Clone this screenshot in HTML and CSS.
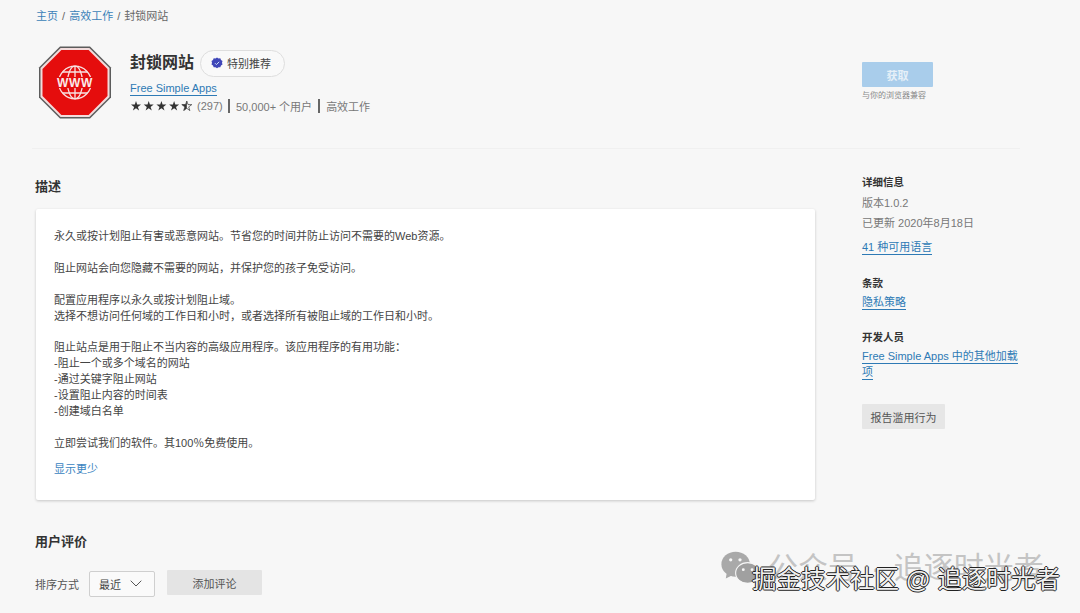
FILE: index.html
```html
<!DOCTYPE html>
<html lang="zh-CN">
<head>
<meta charset="utf-8">
<title>封锁网站</title>
<link rel="stylesheet" href="styles.css">
</head>
<body>
<div class="page">
  <nav class="crumbs"><a>主页</a> / <a>高效工作</a> / <span>封锁网站</span></nav>
  <header class="hero">
    <svg class="logo" viewBox="0 0 74 74" width="74" height="74">
      <polygon points="22,0.5 52,0.5 73,21.500 73,51.500 52,72.500 22,72.500 1,51.500 1,21.500" fill="#5c5c5c"/>
      <polygon points="22.6,2 51.4,2 71.5,22.100 71.5,50.900 51.4,71 22.6,71 2.5,50.900 2.500,22.100" fill="#f3dcdc"/>
      <polygon points="23.4,4 50.6,4 69.5,22.900 69.5,50.100 50.6,69 23.4,69 4.500,50.100 4.500,22.900" fill="#e50d0d"/>
      <g fill="none" stroke="#f8e2e2" stroke-width="1.300">
        <circle cx="37" cy="36.500" r="16.300"/>
        <ellipse cx="37" cy="36.500" rx="7.500" ry="16.300"/>
        <path d="M37 20v33M24.500 26h25M24.500 47h25"/>
      </g>
      <rect x="18" y="31" width="38" height="11" fill="#e50d0d"/>
      <text class="www" x="37" y="40.700" text-anchor="middle">WWW</text>
    </svg>
    <div class="hero-info">
      <div class="title-row">
        <h1>封锁网站</h1>
        <span class="badge">
          <svg viewBox="0 0 12 12" width="12" height="12">
            <path d="M6 .4l1.500 1 1.800-.1.700 1.700 1.500 1-.5 1.800.5 1.800-1.500 1-.7 1.700-1.800-.1-1.500 1-1.500-1-1.800.1-.7-1.700-1.500-1 .5-1.800-.5-1.800 1.500-1 .7-1.700 1.800.1z" fill="#3f46b8"/>
            <path d="M4 6.200l1.400 1.400L8.200 4.800" fill="none" stroke="#cfe0f5" stroke-width="1"/>
          </svg>
          特别推荐
        </span>
      </div>
      <a class="link publisher">Free Simple Apps</a>
      <div class="meta">
        <svg class="stars" viewBox="0 0 61 10" width="61" height="10">
          <defs>
            <path id="star" d="M5 0l1.200 3.600H10L6.900 5.900 8.100 9.600 5 7.300 1.900 9.600 3.100 5.900 0 3.600h3.800z"/>
          </defs>
          <use href="#star" x="0" fill="#333"/>
          <use href="#star" x="12.700" fill="#333"/>
          <use href="#star" x="25.400" fill="#333"/>
          <use href="#star" x="38.100" fill="#333"/>
          <use href="#star" x="50.800" fill="none" stroke="#333" stroke-width=".7"/>
          <path d="M55.800 0v7.300L52.700 9.600 53.900 5.900 50.800 3.600h3.800z" fill="#333"/>
        </svg>
        <span class="count">(297)</span>
        <i class="sep"></i>
        <span>50,000+ 个用户</span>
        <i class="sep"></i>
        <span>高效工作</span>
      </div>
    </div>
    <div class="get">
      <button class="get-btn">获取</button>
      <p>与你的浏览器兼容</p>
    </div>
  </header>
  <hr class="rule">
  <div class="columns">
    <main class="main">
      <h2>描述</h2>
      <section class="card">
        <p>永久或按计划阻止有害或恶意网站。节省您的时间并防止访问不需要的Web资源。</p>
        <p>阻止网站会向您隐藏不需要的网站，并保护您的孩子免受访问。</p>
        <p>配置应用程序以永久或按计划阻止域。<br>选择不想访问任何域的工作日和小时，或者选择所有被阻止域的工作日和小时。</p>
        <p>阻止站点是用于阻止不当内容的高级应用程序。该应用程序的有用功能：<br>-阻止一个或多个域名的网站<br>-通过关键字阻止网站<br>-设置阻止内容的时间表<br>-创建域白名单</p>
        <p>立即尝试我们的软件。其100％免费使用。</p>
        <a class="more">显示更少</a>
      </section>
      <h2 class="reviews">用户评价</h2>
      <div class="sort">
        <span>排序方式</span>
        <span class="select">最近
          <svg viewBox="0 0 12 7" width="12" height="7"><path d="M.7.7L6 6l5.300-5.300" fill="none" stroke="#555" stroke-width="1"/></svg>
        </span>
        <button class="add">添加评论</button>
      </div>
    </main>
    <aside class="side">
      <h3>详细信息</h3>
      <p class="line">版本1.0.2</p>
      <p class="line">已更新 2020年8月18日</p>
      <p class="side-link"><a class="link">41 种可用语言</a></p>
      <h3 class="gap">条款</h3>
      <p class="side-link tight"><a class="link">隐私策略</a></p>
      <h3 class="gap2">开发人员</h3>
      <p class="side-link dev"><a class="link">Free Simple Apps 中的其他加载项</a></p>
      <button class="report">报告滥用行为</button>
    </aside>
  </div>
</div>
<div class="wm">
  <svg class="wechat" viewBox="0 0 36 32" width="40" height="35">
    <ellipse cx="14" cy="13" rx="13" ry="11.500" fill="#a9a9a9"/>
    <path d="M6 20l-1 6 6-3z" fill="#a9a9a9"/>
    <ellipse cx="25" cy="21" rx="11" ry="9.500" fill="#a0a0a0" stroke="#f7f7f7" stroke-width="1"/>
    <circle cx="9.500" cy="9" r="1.500" fill="#f7f7f7"/><circle cx="18" cy="9" r="1.500" fill="#f7f7f7"/>
    <circle cx="21" cy="18" r="1.300" fill="#f7f7f7"/><circle cx="29" cy="18" r="1.300" fill="#f7f7f7"/>
  </svg>
  <span class="wm-a">公众号 · 追逐时光者</span>
</div>
<div class="wm-b">掘金技术社区 @ 追逐时光者</div>
</body>
</html>
```
FILE: styles.css
```css
* { box-sizing: border-box; }
html, body { margin: 0; height: 100%; }
body {
  width: 1080px; height: 613px; overflow: hidden; position: relative;
  background: #f7f7f7; color: #333;
  font-family: "Liberation Sans", "Noto Sans CJK SC", sans-serif;
  font-size: 11px;
}
h1, h2, h3, p { margin: 0; }
button { font: inherit; border: 0; padding: 0; }
.page { padding: 0 0 0 36px; }

.crumbs { height: 33px; line-height: 32px; font-size: 11px; color: #666; word-spacing: 1px; }
.crumbs a { color: #3a7fb8; }

.hero { display: flex; height: 115px; padding-top: 13px; margin-left: 2px; }
.logo { display: block; flex: none; }
.www { font: bold 12px "Liberation Sans", sans-serif; fill: #fbeaea; letter-spacing: .6px; }
.hero-info { width: 750px; padding-left: 18px; }
.title-row { display: flex; align-items: center; height: 30px; margin-top: 2px; }
h1 { font-size: 16px; line-height: 22px; color: #333; font-weight: 700; width: 70px; flex: none; }
.badge {
  display: flex; align-items: center; gap: 4px; height: 27px; width: 85px; padding-left: 10px;
  border: 1px solid #dedede; border-radius: 14px; font-size: 11px; color: #444; background: #f9f9f9;
}
.link { color: #2e7ab5; border-bottom: 1px solid #2e7ab5; }
.publisher { display: inline-block; font-size: 11px; line-height: 13px; margin-top: 4px; }
.meta { display: flex; align-items: center; height: 16px; margin-top: 2px; color: #777; font-size: 11px; }
.stars { display: block; flex: none; margin-left: 1px; }
.count { width: 25px; margin-left: 5px; }
.sep { width: 2px; height: 14px; background: #666; margin: 0 6px; }

.get { margin-top: 16px; flex: none; }
.get-btn {
  display: block; width: 71px; height: 25px; border-radius: 1px;
  background: #a9cdeb; color: #e6f0f8; font-size: 11px; font-weight: 700;
}
.get p { font-size: 8px; line-height: 12px; color: #888; margin-top: 3px; white-space: nowrap; }

.rule { margin: 0 60px 0 -4px; border: 0; border-top: 1px solid #f0f0f0; height: 0; }

.columns { display: flex; }
.main { width: 779px; flex: none; }
h2 { font-size: 13px; line-height: 18px; color: #333; font-weight: 700; padding-top: 29px; height: 60px; margin-left: -1px; }
.card {
  height: 291px; padding: 20px 18px 0; background: #fff; border-radius: 2px;
  box-shadow: 0 1px 3px rgba(0,0,0,.2);
  font-size: 11px; line-height: 15.900px; color: #444;
}
.card p { margin-bottom: 15.900px; }
.more { display: block; color: #3a83c0; margin-top: -6px; }
h2.reviews { height: auto; padding-top: 33px; }
.sort { display: flex; align-items: center; margin: 19px 0 0 -1px; color: #555; font-size: 11px; }
.select {
  display: flex; align-items: center; justify-content: space-between; width: 66px; height: 26px;
  margin-left: 10px; padding: 0 12px 0 9px; background: #fafafa;
  border: 1px solid #cfcfcf; border-radius: 2px; color: #444;
}
.add { width: 95px; height: 25px; margin: 0 0 2px 12px; background: #e4e4e4; color: #555; border-radius: 1px; }

.side { margin-left: 47px; width: 158px; padding-top: 25px; color: #777; font-size: 11px; }
h3 { font-size: 10.500px; line-height: 16px; color: #333; font-weight: 700; }
.line { line-height: 20px; margin-top: 3px; }
.line + .line { margin-top: 0; }
.side-link { margin-top: 6px; line-height: 16px; }
.side-link .link { padding-bottom: 1px; }
.gap { margin-top: 20px; }
.gap2 { margin-top: 19px; }
.tight { margin-top: 3px; }
.dev { margin-top: 3px; }
.report {
  display: block; width: 83px; height: 25px; margin-top: 24px;
  background: #e6e6e6; color: #555; font-size: 11px; border-radius: 1px;
}

.wm { position: absolute; left: 720px; top: 550px; display: flex; align-items: flex-start; gap: 8px; }
.wm-a { font-size: 30px; line-height: 36px; color: #c4c4c4; white-space: nowrap; word-spacing: 4.500px; }
.wechat { display: block; flex: none; }
.wm-b {
  position: absolute; left: 752px; top: 565px; white-space: nowrap;
  font-size: 24.500px; line-height: 30px; color: #f0f0f0;
  text-shadow: 1px 0 #222, -1px 0 #222, 0 1px #222, 0 -1px #222;
}
```
